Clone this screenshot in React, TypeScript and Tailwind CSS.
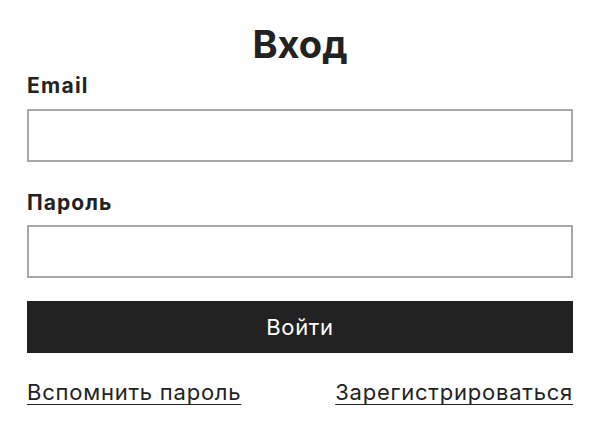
export default function App() {
  return (
    <div
      className="w-[600px] h-[448px] bg-white text-[#222] px-[27px] pt-[21px]"
      style={{ fontFamily: "Inter, 'Noto Sans', sans-serif" }}
    >
      <h1 className="text-center text-[38px] leading-[46px] font-bold">Вход</h1>

      <label className="block mt-[7px] text-[21px] leading-[24px] font-bold tracking-[0.06em]">Email</label>
      <input
        type="email"
        className="block mt-[11px] w-full h-[53px] border-2 border-[#a8a8a8] bg-white outline-none"
      />

      <label className="block mt-[29px] text-[21px] leading-[24px] font-bold tracking-[0.05em]">Пароль</label>
      <input
        type="password"
        className="block mt-[10px] w-full h-[53px] border-2 border-[#a8a8a8] bg-white outline-none"
      />

      <button className="mt-[23px] w-full h-[52px] bg-[#222] text-white text-[22px] font-normal tracking-[0.03em]">
        Войти
      </button>

      <div className="mt-[24px] flex justify-between text-[22px] leading-[30px] tracking-[0.035em]">
        <a href="#" className="underline underline-offset-[4px] decoration-1">
          Вспомнить пароль
        </a>
        <a href="#" className="underline underline-offset-[4px] decoration-1">
          Зарегистрироваться
        </a>
      </div>
    </div>
  );
}
